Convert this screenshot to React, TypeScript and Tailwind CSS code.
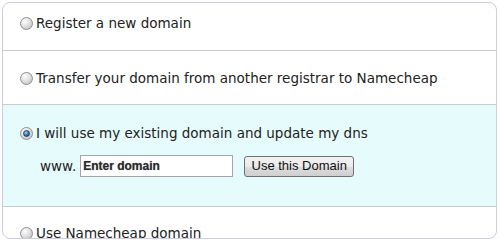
const options = [
  { label: "Register a new domain", pad: "pt-[12px]", h: "h-[48px]" },
  { label: "Transfer your domain from another registrar to Namecheap", pad: "pt-[19px]", h: "h-[54px]" },
];

function Radio({ checked }: { checked?: boolean }) {
  return (
    <span className="relative inline-flex h-[13px] w-[13px] shrink-0 items-center justify-center rounded-full border border-[#8e8e8e] bg-[radial-gradient(circle_at_35%_30%,#ffffff,#e2e2e2_45%,#b9b9b9)]">
      {checked && (
        <span className="h-[7px] w-[7px] rounded-full border border-[#1d3c5e] bg-[radial-gradient(circle_at_35%_30%,#9fd3ff,#2c78c0_55%,#0f3d70)]" />
      )}
    </span>
  );
}

export default function App() {
  return (
    <div className="h-[240px] w-[500px] bg-white pl-[2px] pt-[2px] font-['DejaVu_Sans',sans-serif] text-[13.5px] text-[#222]">
      <div className="flex h-[237px] w-[495px] flex-col overflow-hidden rounded-[8px] border border-[#cfcce0]">
        {options.map((o) => (
          <div key={o.label} className={`${o.h} shrink-0 border-b border-[#c9c9d2] ${o.pad}`}>
            <label className="flex items-center gap-[3px] pl-[17px] leading-[16px]">
              <Radio />
              <span>{o.label}</span>
            </label>
          </div>
        ))}
        <div className="h-[102px] shrink-0 border-b border-[#c9c9d2] bg-[#e6fcfc] pt-[20px]">
          <label className="flex items-center gap-[3px] pl-[17px] leading-[16px]">
            <Radio checked />
            <span>I will use my existing domain and update my dns</span>
          </label>
          <div className="mt-[14px] flex items-center pl-[37px]">
            <span className="mr-[4px]">www.</span>
            <input
              defaultValue="Enter domain"
              className="h-[22px] w-[153px] border border-[#a5a5a5] bg-white px-[2px] font-['Liberation_Sans',sans-serif] text-[12px] font-bold text-[#2a2a2a] [text-shadow:0_0_1px_#888] outline-none"
            />
            <button className="ml-[11px] h-[21px] w-[110px] rounded-[3px] border border-[#707070] bg-[linear-gradient(#f2f2f2,#ebebeb_50%,#dddddd_51%,#cfcfcf)] font-['Liberation_Sans',sans-serif] text-[13px] leading-[18px] text-[#111]">
              Use this Domain
            </button>
          </div>
        </div>
        <div className="shrink-0 pt-[18px]">
          <label className="flex items-center gap-[3px] pl-[17px] leading-[16px]">
            <Radio />
            <span>Use Namecheap domain</span>
          </label>
        </div>
      </div>
    </div>
  );
}
